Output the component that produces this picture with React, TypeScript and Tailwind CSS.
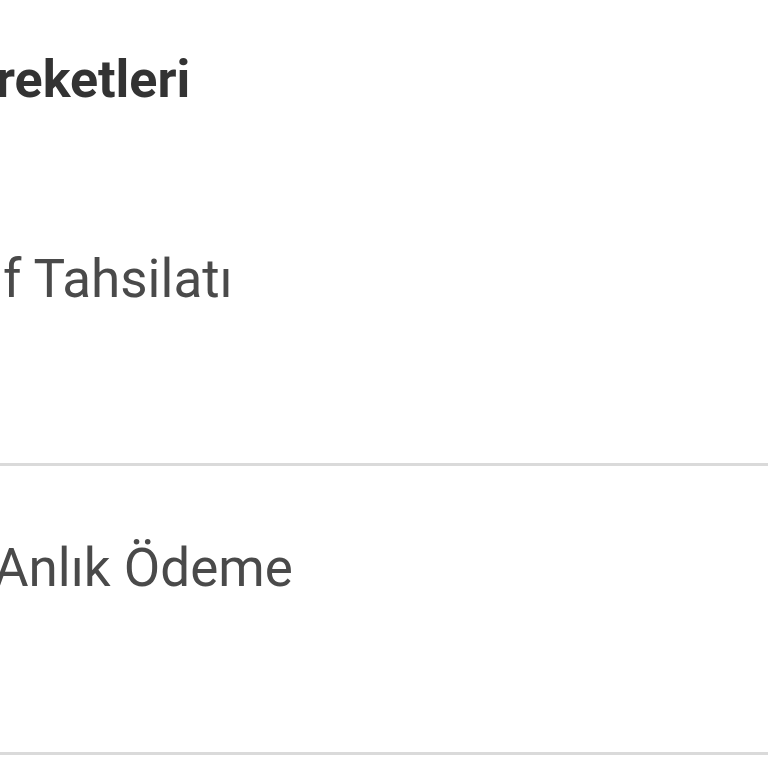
export default function App() {
  return (
    <div className="w-[768px] h-[768px] overflow-hidden bg-white font-['Roboto',sans-serif]">
      {/* Header */}
      <div className="h-[174px] pt-[54px]">
        <h1 className="-ml-[4px] whitespace-nowrap text-[52px] font-bold leading-[52px] text-[#333333]">
          reketleri
        </h1>
      </div>

      {/* Rows */}
      <div className="h-[292px] border-b-[3px] border-[#dadada] pt-[79px]">
        <p className="ml-[3px] whitespace-nowrap text-[53px] leading-[53px] text-[#4a4a4a]">
          f Tahsilatı
        </p>
      </div>
      <div className="h-[289px] border-b-[3px] border-[#dadada] pt-[76px]">
        <p className="-ml-[6px] whitespace-nowrap text-[53px] leading-[53px] text-[#4a4a4a]">
          Anlık Ödeme
        </p>
      </div>
    </div>
  );
}
